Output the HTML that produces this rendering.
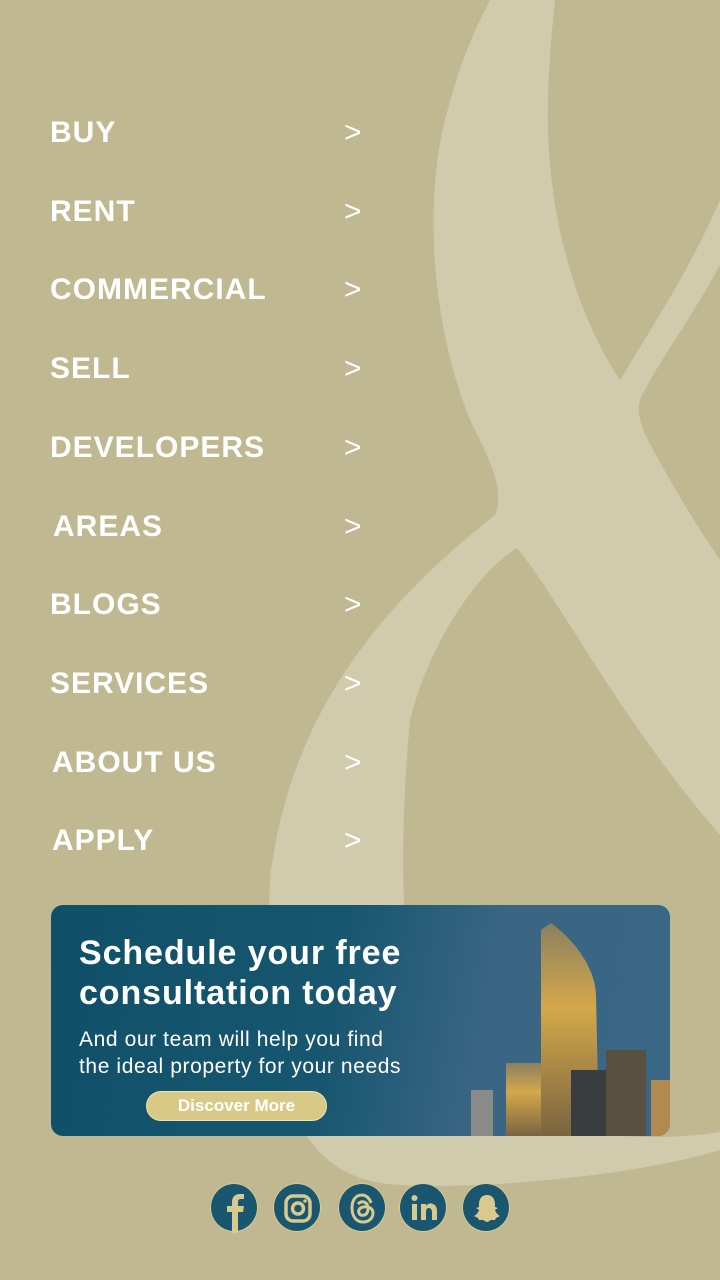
<!DOCTYPE html>
<html><head><meta charset="utf-8"><style>
*{margin:0;padding:0;box-sizing:border-box}
body{width:720px;height:1280px;background:#bfb890;position:relative;overflow:hidden;font-family:"Liberation Sans",sans-serif}
svg.bg{position:absolute;left:0;top:0}
.item{position:absolute;left:50px;color:#fff;font-weight:bold;font-size:30px;letter-spacing:1px;line-height:40px}
.arr{position:absolute;left:344px;color:#fff;font-size:30px;line-height:40px;font-weight:normal}
.banner{position:absolute;left:51px;top:905px;width:619px;height:231px;border-radius:12px;overflow:hidden;background:linear-gradient(100deg,#0f5068 0%,#17566f 45%,#3a6684 70%,#3a6786 100%)}
.h{position:absolute;left:28px;top:28px;color:#fff;font-weight:bold;font-size:34px;line-height:40px;letter-spacing:0.9px}
.p{position:absolute;left:28px;top:121px;color:#fff;font-size:21px;line-height:27px;letter-spacing:0.6px}
.btn{position:absolute;left:95px;top:186px;width:181px;height:30px;border-radius:15px;background:#d9c987;border:1px solid #efe3b0;color:#fff;font-weight:bold;font-size:17px;text-align:center;line-height:28px}
.ic{position:absolute;top:1183px;width:48px;height:49px;border-radius:50%;background:#1a5670;border:1px solid #d8c98e}
</style></head><body>
<svg class="bg" width="720" height="1280">
<path fill="#d0cbad" d="M490,0 L720,0 L720,1150 C650,1172 500,1190 400,1185 C300,1180 262,1100 270,880 C290,700 400,590 495,515 C505,490 490,460 470,420 C430,320 425,200 445,120 C460,60 475,30 490,0 Z"/>
<path fill="#bfb890" d="M555,0 L720,0 L720,200 C690,270 650,330 620,380 C580,320 545,220 548,100 C549,60 552,30 555,0 Z"/>
<path fill="#bfb890" d="M720,265 C690,320 660,360 645,390 C635,405 638,420 648,440 C680,500 700,530 720,560 Z"/>
<path fill="#bfb890" d="M517,548 C560,600 620,720 720,835 L720,1132 C600,1150 480,1120 430,1040 C400,990 398,850 410,720 C430,640 480,570 517,548 Z"/>
</svg>
<div class="item" style="top:113px">BUY</div><div class="arr" style="top:113px">&gt;</div>
<div class="item" style="top:192px">RENT</div><div class="arr" style="top:192px">&gt;</div>
<div class="item" style="top:270px">COMMERCIAL</div><div class="arr" style="top:270px">&gt;</div>
<div class="item" style="top:349px">SELL</div><div class="arr" style="top:349px">&gt;</div>
<div class="item" style="top:428px">DEVELOPERS</div><div class="arr" style="top:428px">&gt;</div>
<div class="item" style="top:507px;left:53px">AREAS</div><div class="arr" style="top:507px">&gt;</div>
<div class="item" style="top:585px">BLOGS</div><div class="arr" style="top:585px">&gt;</div>
<div class="item" style="top:664px">SERVICES</div><div class="arr" style="top:664px">&gt;</div>
<div class="item" style="top:743px;left:52px">ABOUT US</div><div class="arr" style="top:743px">&gt;</div>
<div class="item" style="top:821px;left:52px">APPLY</div><div class="arr" style="top:821px">&gt;</div>
<div class="banner">
<svg style="position:absolute;left:0;top:0" width="619" height="231">
<defs><linearGradient id="g" x1="0" y1="0" x2="0" y2="1"><stop offset="0" stop-color="#8a8060"/><stop offset="0.4" stop-color="#d4a84a"/><stop offset="1" stop-color="#7a6440"/></linearGradient></defs>
<rect x="420" y="185" width="22" height="46" fill="#8a8a88"/>
<rect x="455" y="158" width="35" height="73" fill="url(#g)"/>
<path d="M490,231 L490,25 L500,18 C530,40 545,70 545,90 L548,231 Z" fill="url(#g)"/>
<rect x="520" y="165" width="40" height="66" fill="#3a3d40"/>
<rect x="555" y="145" width="40" height="86" fill="#5a5040"/>
<rect x="600" y="175" width="19" height="56" fill="#b08a50"/>
</svg>
<div class="h">Schedule your free<br>consultation today</div>
<div class="p">And our team will help you find<br>the ideal property for your needs</div>
<div class="btn">Discover More</div>
</div>
<div class="ic" style="left:210px"><svg width="48" height="49" viewBox="0 0 48 49"><path d="M27,49 V28 H32 L33,22 H27 V18 C27,16 28,15 30,15 H33 V10 H29 C24,10 21,13 21,18 V22 H16 V28 H21 V49" fill="#d8c98e"/></svg></div>
<div class="ic" style="left:273px"><svg width="48" height="49" viewBox="0 0 48 49"><rect x="12" y="12" width="24" height="25" rx="7" fill="none" stroke="#d8c98e" stroke-width="3.5"/><circle cx="24" cy="24.5" r="5.5" fill="none" stroke="#d8c98e" stroke-width="3.5"/><circle cx="31" cy="17" r="1.8" fill="#d8c98e"/></svg></div>
<div class="ic" style="left:338px"><svg width="48" height="49" viewBox="0 0 48 49"><path d="M32,19 C30,13 26,11 23,11 C16,11 13,17 13,24 C13,32 17,38 24,38 C30,38 34,34 34,29 C34,24 29,22 24,23 C20,24 19,27 20,29 C21,32 26,32 28,29 C30,25 29,19 25,18 C22,17 20,19 19,20" fill="none" stroke="#d8c98e" stroke-width="3"/></svg></div>
<div class="ic" style="left:399px"><svg width="48" height="49" viewBox="0 0 48 49"><rect x="12" y="20" width="5" height="16" fill="#d8c98e"/><circle cx="14.5" cy="14" r="3" fill="#d8c98e"/><path d="M21,20 H26 V22 C28,19 31,19 33,20 C36,21 37,24 37,27 V36 H32 V28 C32,25 30,24 28.5,24 C27,24 26,25.5 26,28 V36 H21 Z" fill="#d8c98e"/></svg></div>
<div class="ic" style="left:462px"><svg width="48" height="49" viewBox="0 0 48 49"><path d="M24,11 C18,11 16,16 16,20 V23 L13,24 L16,26 C15,29 13,31 11,32 L15,34 L16,36 H20 C22,37 23,38 24,38 C25,38 26,37 28,36 H32 L33,34 L37,32 C35,31 33,29 32,26 L35,24 L32,23 V20 C32,16 30,11 24,11 Z" fill="#d8c98e"/></svg></div>
</body></html>
